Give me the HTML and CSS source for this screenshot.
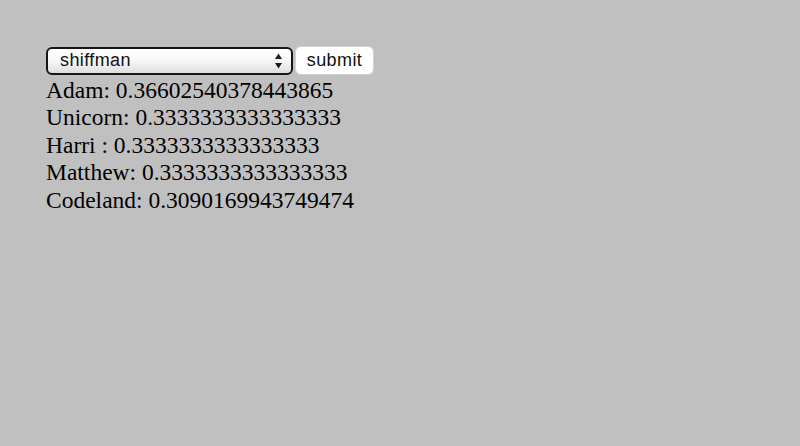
FILE: index.html
```html
<!DOCTYPE html>
<html>
<head>
<meta charset="utf-8">
<link rel="stylesheet" href="styles.css">
</head>
<body>
<main class="page">
  <div class="controls">
    <div class="select">
      <span class="select-label">shiffman</span>
      <svg class="select-arrows" width="7" height="16" viewBox="0 0 7 16">
        <path d="M3.5 0.5 L7 6 L0 6 Z" fill="#1c1c1c"/>
        <path d="M3.5 15.5 L7 10 L0 10 Z" fill="#1c1c1c"/>
      </svg>
    </div>
    <button class="submit">submit</button>
  </div>
  <div class="results">
    <div class="row">Adam: 0.36602540378443865</div>
    <div class="row">Unicorn: 0.3333333333333333</div>
    <div class="row">Harri : 0.3333333333333333</div>
    <div class="row">Matthew: 0.3333333333333333</div>
    <div class="row">Codeland: 0.3090169943749474</div>
  </div>
</main>
</body>
</html>
```
FILE: styles.css
```css
html, body {
  margin: 0;
  padding: 0;
  background: #c0c0c0;
}
.page {
  padding: 46px 0 0 46px;
}
.controls {
  display: flex;
  align-items: center;
  gap: 2px;
  height: 29px;
}
.select {
  box-sizing: border-box;
  width: 247px;
  height: 28px;
  border: 2px solid #161616;
  border-radius: 6px;
  background: linear-gradient(#ffffff, #f6f6f6 50%, #dedede);
  display: flex;
  align-items: center;
  justify-content: space-between;
  padding: 0 9px 0 12px;
  font-family: "Liberation Sans", Arial, sans-serif;
  font-size: 18px;
  letter-spacing: 0.4px;
  color: #111;
}
.select-arrows {
  display: block;
}
.submit {
  box-sizing: border-box;
  height: 29px;
  width: 79px;
  border: 1px solid #d2d2d2;
  border-radius: 6px;
  background: #ffffff;
  font-family: "Liberation Sans", Arial, sans-serif;
  font-size: 18px;
  letter-spacing: 0.4px;
  color: #111;
  padding: 0;
}
.results {
  padding-top: 1.5px;
  font-family: "Liberation Serif", "Times New Roman", serif;
  font-size: 23.5px;
  line-height: 27.5px;
  color: #000;
}
```
